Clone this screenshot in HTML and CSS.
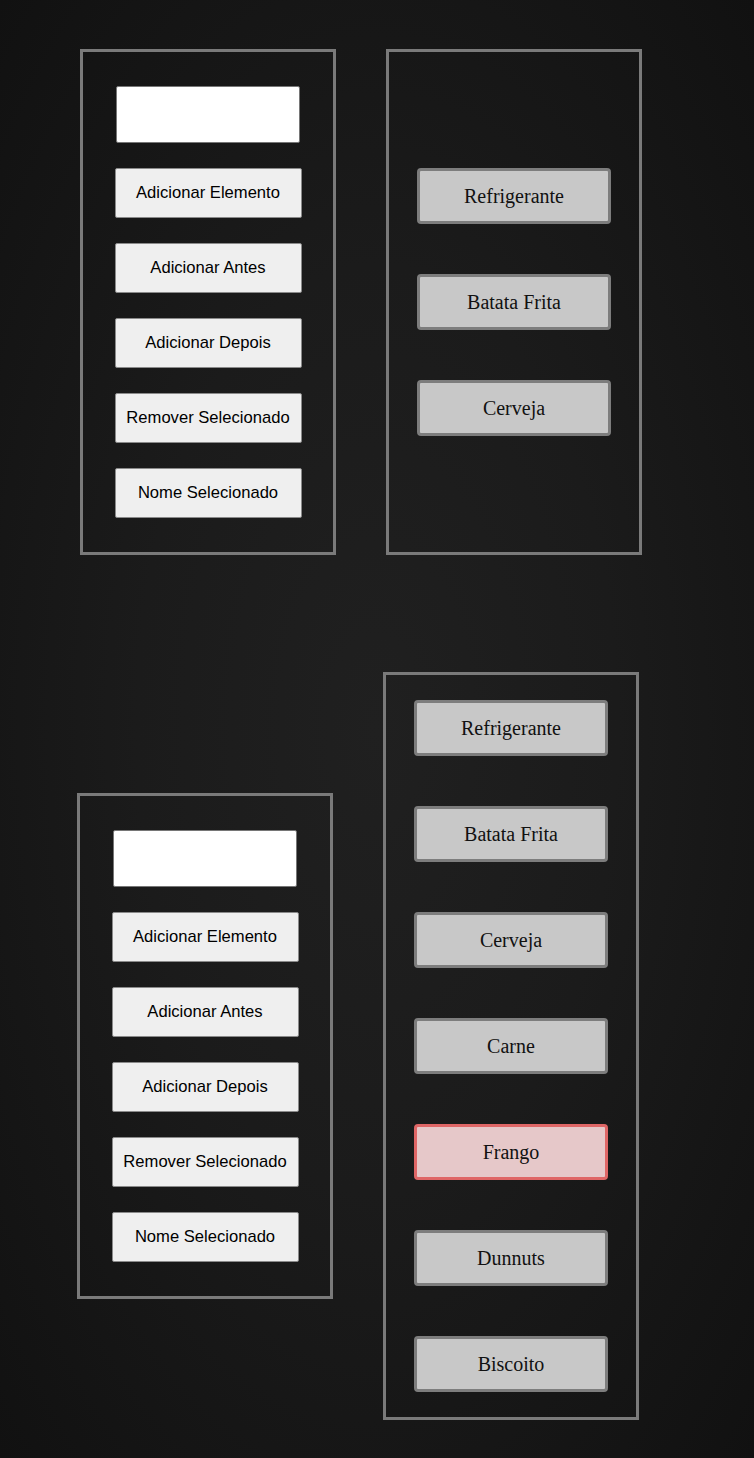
FILE: index.html
```html
<!DOCTYPE html>
<html>
<head>
    <meta charset="UTF-8">
    <title>Lista Encadeada</title>
    <link rel="stylesheet" href="styles.css">
</head>
<body>
    <!-- Estado inicial -->
    <div class="row row-first">
        <div class="controls">
            <input type="text" class="name-input" />
            <button class="btn">Adicionar Elemento</button>
            <button class="btn">Adicionar Antes</button>
            <button class="btn">Adicionar Depois</button>
            <button class="btn">Remover Selecionado</button>
            <button class="btn">Nome Selecionado</button>
        </div>
        <div class="list">
            <div class="item">Refrigerante</div>
            <div class="item">Batata Frita</div>
            <div class="item">Cerveja</div>
        </div>
    </div>

    <!-- Depois de adicionar -->
    <div class="row row-second">
        <div class="controls">
            <input type="text" class="name-input" />
            <button class="btn">Adicionar Elemento</button>
            <button class="btn">Adicionar Antes</button>
            <button class="btn">Adicionar Depois</button>
            <button class="btn">Remover Selecionado</button>
            <button class="btn">Nome Selecionado</button>
        </div>
        <div class="list">
            <div class="item">Refrigerante</div>
            <div class="item">Batata Frita</div>
            <div class="item">Cerveja</div>
            <div class="item">Carne</div>
            <div class="item selected">Frango</div>
            <div class="item">Dunnuts</div>
            <div class="item">Biscoito</div>
        </div>
    </div>
</body>
</html>
```

FILE: styles.css
```css
html {
    background: #151515;
}
body {
    margin: 0;
    min-height: 1458px;
    padding: 49px 0 38px;
    box-sizing: border-box;
    font-family: 'Liberation Sans', Arial, sans-serif;
    background: radial-gradient(ellipse at 50% 50%, #202020 0%, #1b1b1b 45%, #111 100%);
}
.row {
    display: flex;
    align-items: center;
    gap: 50px;
}
.row-first {
    padding-left: 80px;
    margin-bottom: 117px;
}
.row-second {
    padding-left: 77px;
}
.controls {
    width: 250px;
    border: 3px solid #7a7a7a;
    padding: 34px 0;
    display: flex;
    flex-direction: column;
    align-items: center;
    gap: 25px;
}
.name-input {
    width: 184px;
    height: 57px;
    box-sizing: border-box;
    margin: 0;
    border: 1px solid #767676;
    border-radius: 2px;
    background: white;
}
.btn {
    width: 187px;
    height: 50px;
    margin: 0;
    background: #efefef;
    border: 1px solid #8a8a8a;
    border-radius: 2px;
    font-family: 'Liberation Sans', Arial, sans-serif;
    font-size: 16.6px;
    color: #000;
    padding: 0;
}
.list {
    width: 250px;
    min-height: 500px;
    border: 3px solid #7a7a7a;
    display: flex;
    flex-direction: column;
    align-items: center;
    justify-content: center;
}
.item {
    width: 194px;
    height: 56px;
    box-sizing: border-box;
    margin: 25px 0;
    background: #c8c8c8;
    border: 3px solid #7d7d7d;
    border-radius: 4px;
    display: flex;
    align-items: center;
    justify-content: center;
    font-family: 'Liberation Serif', 'Times New Roman', serif;
    font-size: 20px;
    color: #111;
}
.item.selected {
    background: #e6c8c9;
    border-color: #df6666;
}
```
